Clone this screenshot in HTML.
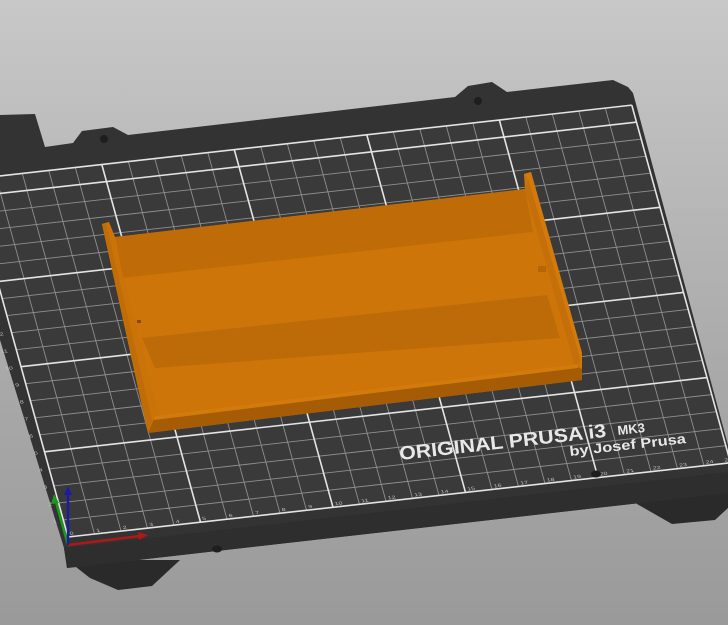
<!DOCTYPE html>
<html><head><meta charset="utf-8"><style>
html,body{margin:0;padding:0;width:728px;height:625px;overflow:hidden}
body{background:linear-gradient(#c8c8c8,#a9a9a9 60%,#9a9a9a)}
svg{display:block}
</style></head><body>
<svg width="728" height="625" viewBox="0 0 728 625" xmlns="http://www.w3.org/2000/svg">
<polygon points="67,560 90,578 118,590 152,586 180,560" fill="#2a2a2a"/>
<polygon points="630,500 672,524 715,520 728,508 728,490" fill="#2a2a2a"/>
<polygon points="0,115 35,114 45,147 73,143 82,131 113,127 128,135 455,97 468,86 492,82 507,92 613,80 628,87 633,93 728,445 728,493 67,568 64,548 0,340" fill="#333333"/>
<polygon points="64,548 728,472 728,493 67,568" fill="#2e2e2e"/>
<g transform="matrix(2.65,-0.297,0.47,1.703,68,537)">
<rect x="0" y="-210" width="250" height="210" fill="#3a3a3a"/>
<path vector-effect="non-scaling-stroke" stroke="#8f8f8f" stroke-width="0.9" fill="none" d="M10 0V-210M20 0V-210M30 0V-210M40 0V-210M60 0V-210M70 0V-210M80 0V-210M90 0V-210M110 0V-210M120 0V-210M130 0V-210M140 0V-210M160 0V-210M170 0V-210M180 0V-210M190 0V-210M210 0V-210M220 0V-210M230 0V-210M240 0V-210
M0 -10H250M0 -20H250M0 -30H250M0 -40H250M0 -60H250M0 -70H250M0 -80H250M0 -90H250M0 -110H250M0 -120H250M0 -130H250M0 -140H250M0 -160H250M0 -170H250M0 -180H250M0 -190H250"/>
<path vector-effect="non-scaling-stroke" stroke="#e4e4e4" stroke-width="1.6" fill="none" d="M0 0V-210M50 0V-210M100 0V-210M150 0V-210M200 0V-210M250 0V-210M0 0H250M0 -50H250M0 -100H250M0 -150H250M0 -200H250M0 -210H250"/>
<g font-family="Liberation Sans, sans-serif" font-size="2.6" fill="#bcbcbc">
<text x="1" y="-1">0</text><text x="11" y="-1">1</text><text x="21" y="-1">2</text><text x="31" y="-1">3</text><text x="41" y="-1">4</text><text x="51" y="-1">5</text><text x="61" y="-1">6</text><text x="71" y="-1">7</text><text x="81" y="-1">8</text><text x="91" y="-1">9</text><text x="101" y="-1">10</text><text x="111" y="-1">11</text><text x="121" y="-1">12</text><text x="131" y="-1">13</text><text x="141" y="-1">14</text><text x="151" y="-1">15</text><text x="161" y="-1">16</text><text x="171" y="-1">17</text><text x="181" y="-1">18</text><text x="191" y="-1">19</text><text x="201" y="-1">20</text><text x="211" y="-1">21</text><text x="221" y="-1">22</text><text x="231" y="-1">23</text><text x="241" y="-1">24</text><text x="248" y="-1">25</text>
<text x="-4" y="-9">1</text><text x="-4" y="-19">2</text><text x="-4" y="-29">3</text><text x="-4" y="-39">4</text><text x="-4" y="-49">5</text><text x="-4" y="-59">6</text><text x="-4" y="-69">7</text><text x="-4" y="-79">8</text><text x="-4" y="-89">9</text><text x="-6" y="-99">10</text><text x="-6" y="-109">11</text><text x="-6" y="-119">12</text><text x="-6" y="-129">13</text><text x="-6" y="-139">14</text><text x="-6" y="-149">15</text>
</g>
</g>
<ellipse cx="217" cy="549" rx="5" ry="3.5" fill="#1e1e1e"/>
<ellipse cx="596" cy="474" rx="5" ry="3.5" fill="#1e1e1e"/>
<ellipse cx="104" cy="139" rx="4" ry="4" fill="#1e1e1e"/>
<ellipse cx="478" cy="101" rx="4" ry="4" fill="#1e1e1e"/>
<g font-family="Liberation Sans, sans-serif" fill="#e8e8e8" font-weight="bold">
<text transform="translate(400,460) rotate(-6.4)" font-size="19" textLength="208" lengthAdjust="spacingAndGlyphs">ORIGINAL PRUSA i3</text>
<text transform="translate(618,435) rotate(-6.4)" font-size="13">MK3</text>
<text transform="translate(570,456) rotate(-6.4)" font-size="13.5" textLength="117" lengthAdjust="spacingAndGlyphs">by Josef Prusa</text>
</g>
<line x1="68" y1="545" x2="140" y2="536" stroke="#b01818" stroke-width="2.5"/>
<polygon points="138,532 148,535 139,540" fill="#b01818"/>
<line x1="68" y1="545" x2="56" y2="502" stroke="#1a9a1a" stroke-width="2.5"/>
<polygon points="51,504 54,494 59,503" fill="#1a9a1a"/>
<line x1="68" y1="545" x2="68" y2="494" stroke="#1c1ca0" stroke-width="2.5"/>
<polygon points="64,495 68,486 72,495" fill="#1c1ca0"/>
<polygon points="102,224 109,222 115,237 525,189 524,174 531,172 582,353 582,380 148,433" fill="#cd7509"/>
<polygon points="115,237 525,189 533,232 123,278" fill="#bf6c08"/>
<polygon points="142,338 547,295 560,338 155,368" fill="#bd6b08"/>
<polygon points="525,189 531,172 582,353 578,368 575,367" fill="#c46f09"/>
<polygon points="531,172 524,174 528,178 582,365 582,353" fill="#d27a0b"/>
<polygon points="102,224 109,222 160,417 154,419 148,433" fill="#c97308"/>
<polygon points="102,224 106,223 152,420 148,433" fill="#c06d08"/>
<polygon points="154,419 578,367 582,369 582,380 148,433" fill="#a65b05"/>
<polygon points="155,416 578,364 578,368 154,420" fill="#d27b0c"/>
<rect x="538" y="266" width="8" height="6" fill="#b66607"/>
<rect x="137" y="320" width="4" height="3" fill="#8a4a04"/>
</svg>
</body></html>
